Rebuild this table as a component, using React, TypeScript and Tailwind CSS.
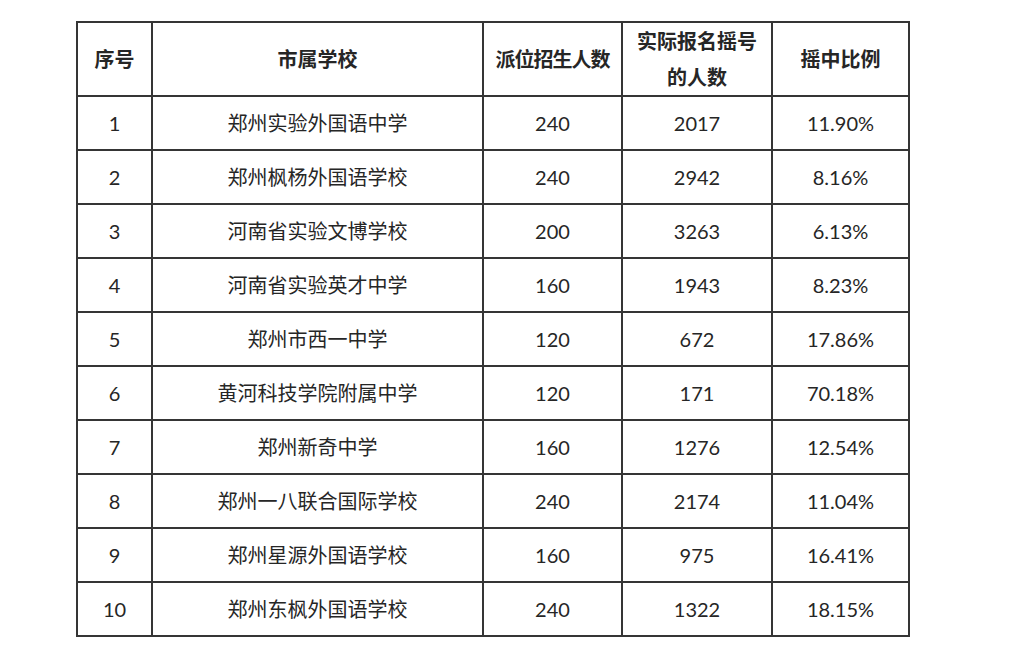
const rows: [string, string, string, string, string][] = [
  ['1', '郑州实验外国语中学', '240', '2017', '11.90%'],
  ['2', '郑州枫杨外国语学校', '240', '2942', '8.16%'],
  ['3', '河南省实验文博学校', '200', '3263', '6.13%'],
  ['4', '河南省实验英才中学', '160', '1943', '8.23%'],
  ['5', '郑州市西一中学', '120', '672', '17.86%'],
  ['6', '黄河科技学院附属中学', '120', '171', '70.18%'],
  ['7', '郑州新奇中学', '160', '1276', '12.54%'],
  ['8', '郑州一八联合国际学校', '240', '2174', '11.04%'],
  ['9', '郑州星源外国语学校', '160', '975', '16.41%'],
  ['10', '郑州东枫外国语学校', '240', '1322', '18.15%'],
];

const cell = 'border-2 border-[#353535] text-center align-middle p-0';

export default function App() {
  return (
    <div className="w-[1014px] h-[654px] bg-white overflow-hidden pt-[21px] pl-[76px] font-['Lato','Noto_Sans_CJK_SC',sans-serif] text-[#262626]">
      <table className="border-collapse table-fixed w-[834px]">
        <colgroup>
          <col className="w-[75px]" />
          <col className="w-[331px]" />
          <col className="w-[139px]" />
          <col className="w-[150px]" />
          <col className="w-[137px]" />
        </colgroup>
        <thead>
          <tr className="h-[73px] text-[20px] font-bold">
            <th className={cell}>序号</th>
            <th className={cell}>市属学校</th>
            <th className={`${cell} tracking-[-1px]`}>派位招生人数</th>
            <th className={`${cell} leading-[36px]`}>
              实际报名摇号
              <br />
              的人数
            </th>
            <th className={cell}>摇中比例</th>
          </tr>
        </thead>
        <tbody>
          {rows.map((r) => (
            <tr key={r[0]} className="h-[54px] text-[20px]">
              <td className={cell}>{r[0]}</td>
              <td className={cell}>{r[1]}</td>
              <td className={cell}>{r[2]}</td>
              <td className={cell}>{r[3]}</td>
              <td className={cell}>{r[4]}</td>
            </tr>
          ))}
        </tbody>
      </table>
    </div>
  );
}
